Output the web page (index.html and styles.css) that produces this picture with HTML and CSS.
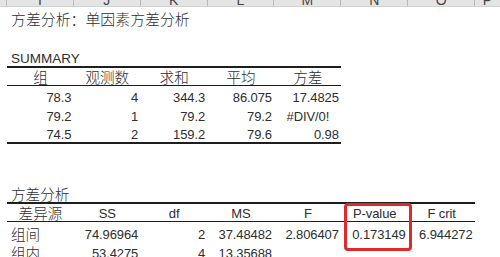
FILE: index.html
```html
<!DOCTYPE html>
<html lang="zh-CN">
<head>
<meta charset="utf-8">
<title>方差分析：单因素方差分析</title>
<link rel="stylesheet" href="styles.css">
</head>
<body>
<div class="sheet">
  <div class="colhead">
    <div class="ch"></div>
    <div class="ch"><span>I</span></div>
    <div class="ch"><span>J</span></div>
    <div class="ch"><span>K</span></div>
    <div class="ch"><span>L</span></div>
    <div class="ch"><span>M</span></div>
    <div class="ch"><span>N</span></div>
    <div class="ch"><span>O</span></div>
    <div class="ch last"><span>P</span></div>
  </div>

  <div class="row">
    <div class="c"></div>
    <div class="c l cjk wide title">方差分析：单因素方差分析</div>
  </div>
  <div class="row"></div>
  <div class="row">
    <div class="c"></div>
    <div class="c l lat sum">SUMMARY</div>
  </div>
  <div class="row">
    <div class="c"></div>
    <div class="c m cjk tt hb">组</div>
    <div class="c m cjk tt hb">观测数</div>
    <div class="c m cjk tt hb">求和</div>
    <div class="c m cjk tt hb">平均</div>
    <div class="c m cjk tt hb">方差</div>
  </div>
  <div class="row">
    <div class="c"></div>
    <div class="c r lat">78.3</div>
    <div class="c r lat">4</div>
    <div class="c r lat">344.3</div>
    <div class="c r lat">86.075</div>
    <div class="c r lat">17.4825</div>
  </div>
  <div class="row">
    <div class="c"></div>
    <div class="c r lat">79.2</div>
    <div class="c r lat">1</div>
    <div class="c r lat">79.2</div>
    <div class="c r lat">79.2</div>
    <div class="c m lat">#DIV/0!</div>
  </div>
  <div class="row">
    <div class="c"></div>
    <div class="c r lat bt">74.5</div>
    <div class="c r lat bt">2</div>
    <div class="c r lat bt">159.2</div>
    <div class="c r lat bt">79.6</div>
    <div class="c r lat bt">0.98</div>
  </div>
  <div class="row"></div>
  <div class="row"></div>
  <div class="row">
    <div class="c"></div>
    <div class="c l cjk">方差分析</div>
  </div>
  <div class="row">
    <div class="c"></div>
    <div class="c m cjk tt hb">差异源</div>
    <div class="c m lat tt hb">SS</div>
    <div class="c m lat tt hb">df</div>
    <div class="c m lat tt hb">MS</div>
    <div class="c m lat tt hb">F</div>
    <div class="c m lat tt hb hlcell">P-value<span class="hl"></span></div>
    <div class="c m lat tt hb">F crit</div>
  </div>
  <div class="row">
    <div class="c"></div>
    <div class="c l cjk">组间</div>
    <div class="c r lat">74.96964</div>
    <div class="c r lat">2</div>
    <div class="c r lat">37.48482</div>
    <div class="c r lat">2.806407</div>
    <div class="c r lat">0.173149</div>
    <div class="c r lat">6.944272</div>
  </div>
  <div class="row">
    <div class="c"></div>
    <div class="c l cjk">组内</div>
    <div class="c r lat">53.4275</div>
    <div class="c r lat">4</div>
    <div class="c r lat">13.35688</div>
    <div class="c"></div>
    <div class="c"></div>
    <div class="c"></div>
  </div>
</div>
</body>
</html>
```

FILE: styles.css
```css
html, body {
  margin: 0;
  padding: 0;
  background: #ffffff;
}

.sheet {
  width: 500px;
  height: 257px;
  overflow: hidden;
  color: #2e2e2e;
  font-family: "Liberation Sans", "Noto Sans CJK SC", sans-serif;
}

.colhead,
.row {
  display: grid;
  grid-template-columns: 7px repeat(7, 66.86px) 1fr;
}

.colhead {
  height: 7px;
  background: #e4e4e4;
  border-bottom: 1px solid #d2d2d2;
  box-sizing: border-box;
  overflow: hidden;
}

.ch {
  height: 7px;
  border-right: 1px solid #b9b9b9;
  box-sizing: border-box;
  overflow: hidden;
  text-align: center;
  font-family: "Liberation Sans", sans-serif;
  font-size: 14px;
  color: #444444;
}

.ch.last {
  border-right: none;
}

.ch span {
  display: block;
  line-height: 14px;
  margin-top: -6.6px;
}

.row {
  height: 19.55px;
}

.c {
  display: flex;
  align-items: flex-end;
  box-sizing: border-box;
  white-space: nowrap;
  min-width: 0;
}

.lat {
  font-family: "Liberation Sans", sans-serif;
  font-size: 13px;
  line-height: 15px;
  letter-spacing: -0.1px;
}

.sum {
  font-size: 13.5px;
  letter-spacing: 0;
}

.cjk {
  font-family: "Noto Sans CJK SC", sans-serif;
  font-weight: 300;
  font-size: 14.6px;
  line-height: 17px;
}

.title {
  font-size: 14.9px;
  line-height: 16px;
}

.wide {
  grid-column: span 4;
}

.l {
  justify-content: flex-start;
  padding-left: 4px;
}

.r {
  justify-content: flex-end;
  padding-right: 2.5px;
}

.m {
  justify-content: center;
}

.tt {
  border-top: 2px solid #1e1e1e;
}

.hb {
  border-bottom: 1px solid #1e1e1e;
}

.bt {
  border-bottom: 2px solid #1e1e1e;
}

.hlcell {
  position: relative;
}

.hl {
  position: absolute;
  left: 2.5px;
  top: -1px;
  width: 68px;
  height: 48px;
  border: 3px solid #e2292a;
  border-radius: 4px;
  box-sizing: border-box;
}
```
